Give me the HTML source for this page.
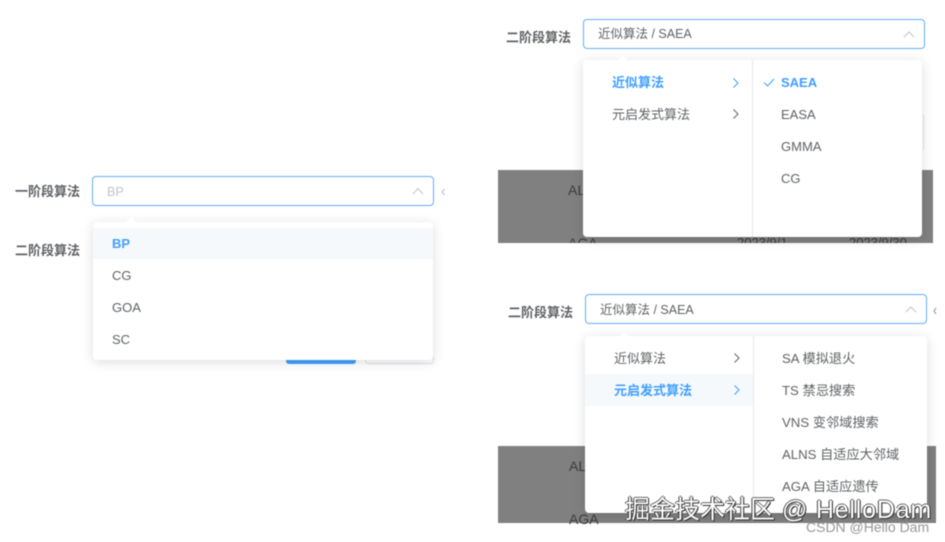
<!DOCTYPE html>
<html lang="zh">
<head>
<meta charset="utf-8">
<style>
html,body{margin:0;padding:0;background:#fff}
body{width:945px;height:542px;position:relative;overflow:hidden;font-family:"Liberation Sans","Noto Sans CJK SC",sans-serif;color:#606266;font-size:13px}
#w{position:absolute;left:0;top:0;width:945px;height:542px;filter:blur(.45px)}
.t{position:absolute;white-space:nowrap;line-height:20px}
.lb{font-weight:700;font-size:13px;color:#606266}
.in{position:absolute;box-sizing:border-box;width:342px;height:30px;border:1.5px solid #5fadfa;border-radius:4px;background:#fff}
.dd{position:absolute;background:#fff;border-radius:4px;box-shadow:0 2px 12px rgba(0,0,0,.14);overflow:hidden}
.g{position:absolute;background:#808080}
.bl{color:#409eff;font-weight:700}
.hl{position:absolute;background:#f5f9fc}
.dv{position:absolute;width:1px;background:#e4e7ed}
svg{position:absolute;overflow:visible}
.wm{position:absolute;white-space:nowrap;color:#fff;font-size:25px;line-height:30px;text-shadow:1px 1px 0 #333,-1px 0 0 #444,0 -1px 0 #666,1px 0 0 #333}
.wm span{letter-spacing:.8px}
</style>
</head>
<body>
<div id="w">

<!-- LEFT -->
<div class="t lb" style="left:15px;top:182px">一阶段算法</div>
<div class="t lb" style="left:15px;top:241px">二阶段算法</div>
<div class="in" style="left:92px;top:176px"></div>
<div class="t" style="left:107px;top:182px;color:#c0c4cc;font-size:12.500px">BP</div>
<svg style="left:412px;top:187px" width="12" height="8"><path d="M1 7L6 1.500L11 7" fill="none" stroke="#c0c4cc" stroke-width="1"/></svg>
<svg style="left:441px;top:188px" width="4" height="8"><path d="M3.500 1L1 4L3.500 7" fill="none" stroke="#b8bcc4" stroke-width="1"/></svg>
<div style="position:absolute;left:286px;top:355px;width:70px;height:9px;background:#409eff;border-radius:3px"></div>
<div style="position:absolute;left:365px;top:355px;box-sizing:border-box;width:69px;height:9px;border:1px solid #dcdfe6;border-radius:3px"></div>
<div class="dd" style="left:93px;top:222px;width:340px;height:138px">
  <div class="hl" style="left:0;top:6px;width:340px;height:31px"></div>
  <div class="t bl" style="left:19px;top:12px">BP</div>
  <div class="t" style="left:19px;top:44px">CG</div>
  <div class="t" style="left:19px;top:76px">GOA</div>
  <div class="t" style="left:19px;top:108px">SC</div>
</div>
<div style="position:absolute;left:128px;top:218px;width:7px;height:7px;background:#fff;transform:rotate(45deg)"></div>

<!-- TOP RIGHT -->
<div class="t lb" style="left:506px;top:28px">二阶段算法</div>
<div class="g" style="left:498px;top:170px;width:435px;height:73px"></div>
<div class="t" style="left:568px;top:180px;color:#3c3c3c;font-size:14px">AL</div>
<div class="t" style="left:568px;top:233px;color:#3c3c3c;height:10px;overflow:hidden;font-size:14px">AGA</div>
<div class="t" style="left:737px;top:233px;color:#3c3c3c;height:10px;overflow:hidden">2023/9/1</div>
<div class="t" style="left:849px;top:233px;color:#3c3c3c;height:10px;overflow:hidden">2023/9/30</div>
<div style="position:absolute;left:915px;top:114px;width:9px;height:37px;box-sizing:border-box;border:1px solid #e4e7ed;border-left:0;border-radius:0 3px 3px 0"></div>
<div class="in" style="left:583px;top:19px"></div>
<div class="t" style="left:598px;top:24px;font-size:12.500px">近似算法 / SAEA</div>
<svg style="left:903px;top:31px" width="12" height="7"><path d="M1 6L6 1L11 6" fill="none" stroke="#c0c4cc" stroke-width="1"/></svg>
<div class="dd" style="left:583px;top:60px;width:339px;height:177px">
  <div class="dv" style="left:169px;top:0;height:177px"></div>
  <div class="t bl" style="left:29px;top:13px">近似算法</div>
  <div class="t" style="left:29px;top:45px">元启发式算法</div>
  <svg style="left:150px;top:18px" width="6" height="10"><path d="M.5 .5L5 5L.5 9.500" fill="none" stroke="#409eff" stroke-width="1"/></svg>
  <svg style="left:150px;top:49px" width="6" height="10"><path d="M.5 .5L5 5L.5 9.500" fill="none" stroke="#606266" stroke-width="1"/></svg>
  <svg style="left:180px;top:18px" width="12" height="9"><path d="M1 4.500L4.500 8L11 1" fill="none" stroke="#409eff" stroke-width="1"/></svg>
  <div class="t bl" style="left:198px;top:13px">SAEA</div>
  <div class="t" style="left:198px;top:45px">EASA</div>
  <div class="t" style="left:198px;top:77px">GMMA</div>
  <div class="t" style="left:198px;top:109px">CG</div>
</div>
<div style="position:absolute;left:619px;top:57px;width:7px;height:7px;background:#fff;transform:rotate(45deg)"></div>

<!-- BOTTOM RIGHT -->
<div class="t lb" style="left:508px;top:303px">二阶段算法</div>
<div class="g" style="left:498px;top:446px;width:438px;height:77px"></div>
<div class="t" style="left:569px;top:456px;color:#3c3c3c;font-size:14px">AL</div>
<div class="t" style="left:569px;top:509px;color:#3c3c3c;font-size:14px">AGA</div>
<div class="in" style="left:585px;top:294px"></div>
<div class="t" style="left:600px;top:300px;font-size:12.500px">近似算法 / SAEA</div>
<svg style="left:905px;top:306px" width="12" height="7"><path d="M1 6L6 1L11 6" fill="none" stroke="#c0c4cc" stroke-width="1"/></svg>
<svg style="left:933px;top:307px" width="4" height="8"><path d="M3 1L1 4L3 7" fill="none" stroke="#8a8d93" stroke-width="1"/></svg>
<div class="dd" style="left:585px;top:336px;width:342px;height:177px">
  <div class="hl" style="left:0;top:38px;width:168px;height:32px"></div>
  <div class="dv" style="left:168px;top:0;height:177px"></div>
  <div class="t" style="left:29px;top:13px">近似算法</div>
  <div class="t bl" style="left:29px;top:45px">元启发式算法</div>
  <svg style="left:149px;top:17px" width="6" height="10"><path d="M.5 .5L5 5L.5 9.500" fill="none" stroke="#606266" stroke-width="1"/></svg>
  <svg style="left:149px;top:49px" width="6" height="10"><path d="M.5 .5L5 5L.5 9.500" fill="none" stroke="#409eff" stroke-width="1"/></svg>
  <div class="t" style="left:197px;top:13px;font-size:13.200px">SA 模拟退火</div>
  <div class="t" style="left:197px;top:45px;font-size:13.200px">TS 禁忌搜索</div>
  <div class="t" style="left:197px;top:77px;font-size:13.200px">VNS 变邻域搜索</div>
  <div class="t" style="left:197px;top:109px;font-size:13.200px">ALNS 自适应大邻域</div>
  <div class="t" style="left:197px;top:141px;font-size:13.200px">AGA 自适应遗传</div>
</div>
<div style="position:absolute;left:621px;top:333px;width:7px;height:7px;background:#fff;transform:rotate(45deg)"></div>

<!-- WATERMARKS -->
<div class="wm" style="left:625px;top:495px">掘金技术社区 <span>@ HelloDam</span></div>
<div class="t" style="left:806px;top:517px;color:#979797;font-size:14px">CSDN @Hello Dam</div>
</div>
</body>
</html>
